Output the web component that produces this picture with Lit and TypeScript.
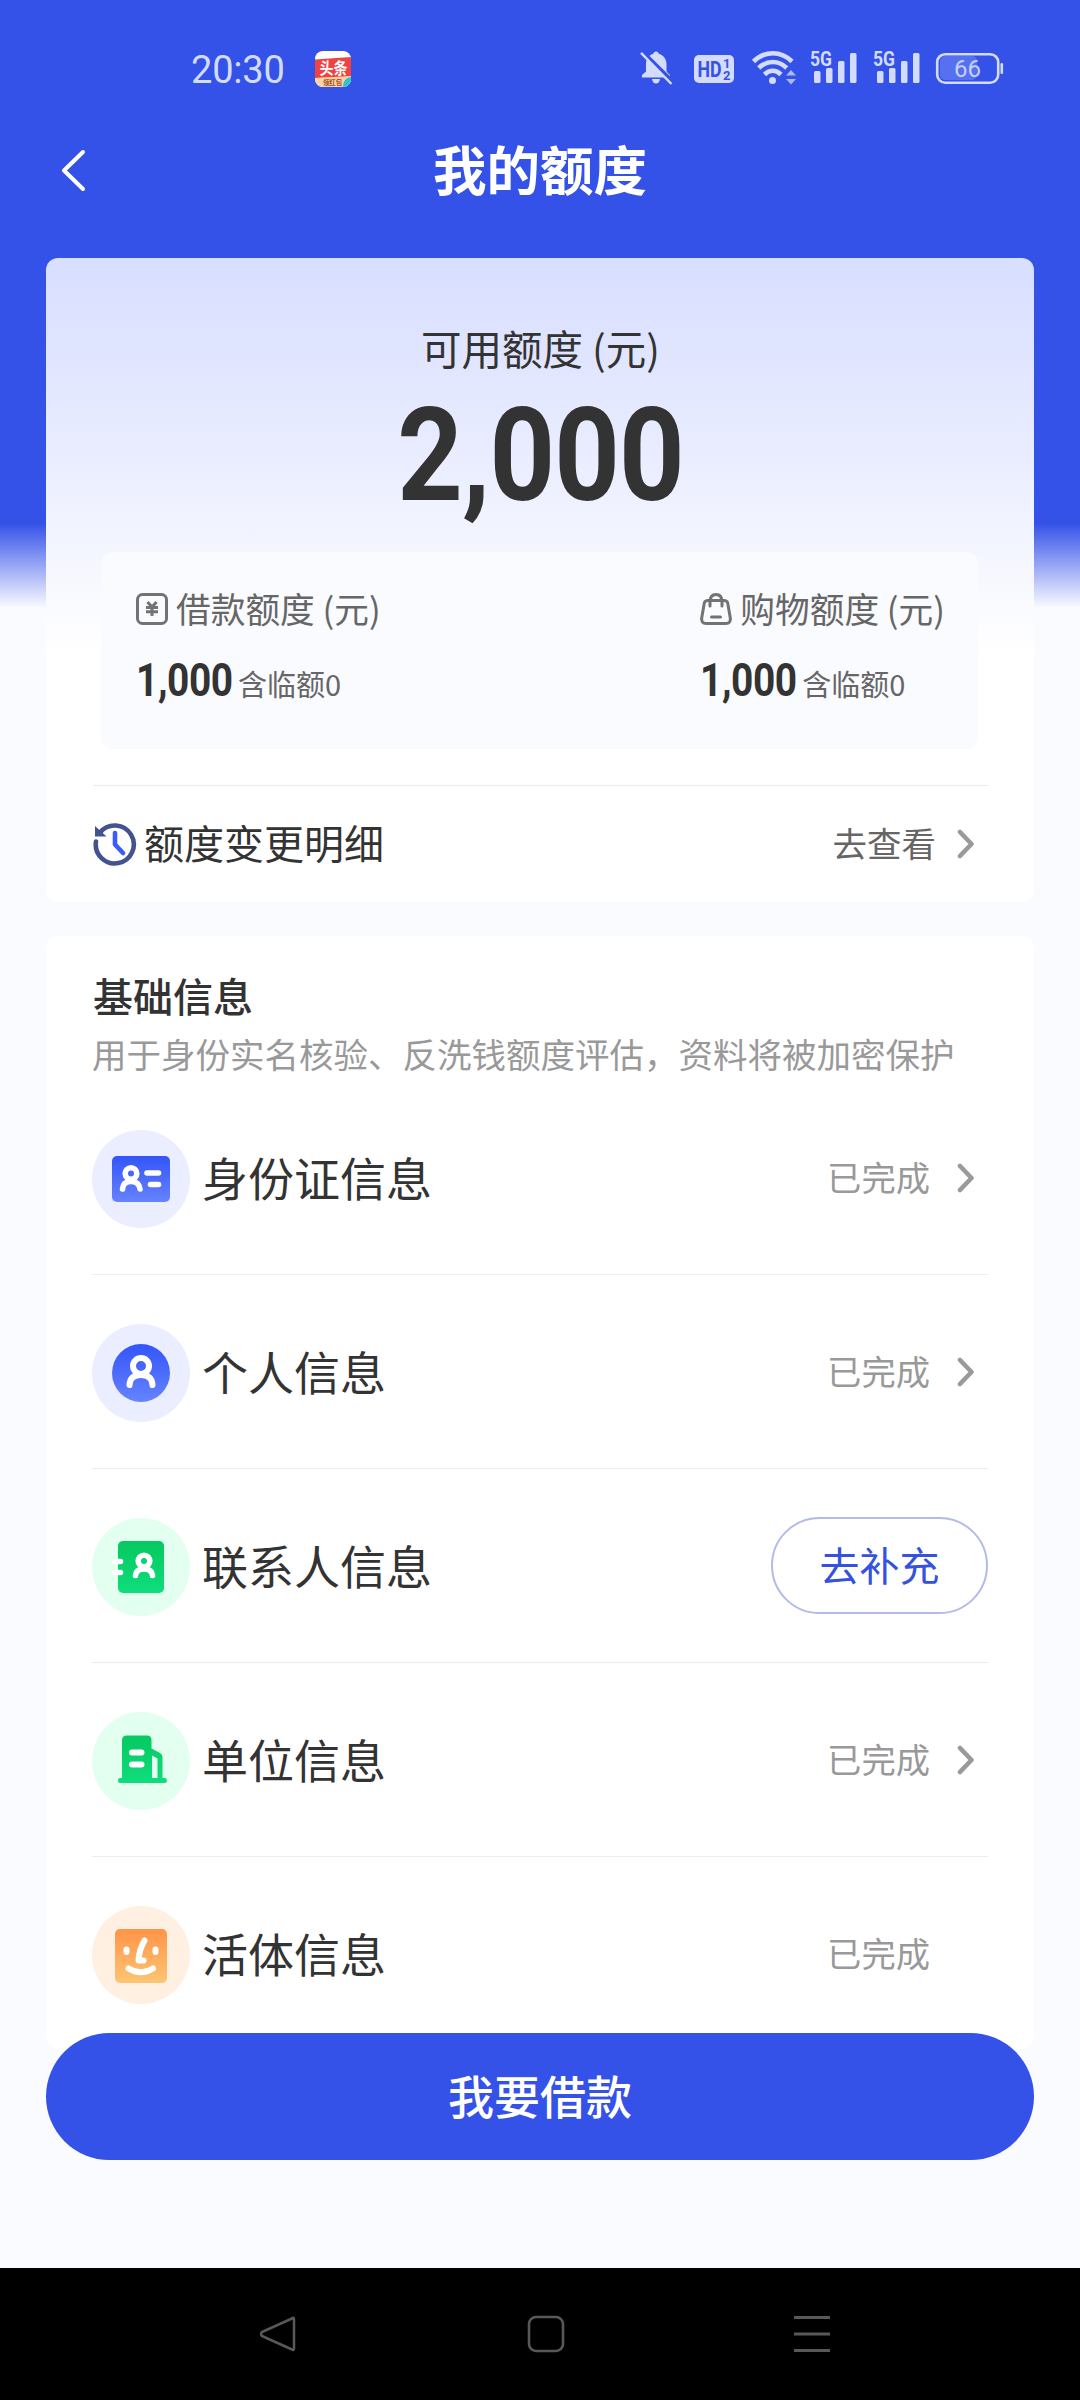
import { LitElement, html, css, svg, nothing, type TemplateResult, type SVGTemplateResult } from "lit";
import { customElement, property } from "lit/decorators.js";

const FONT = css`"Noto Sans CJK SC", "Noto Sans", sans-serif`;

@customElement("status-bar")
class StatusBar extends LitElement {
  static styles = css`
    :host {
      display: flex;
      align-items: flex-start;
      height: 120px;
      padding: 50px 77px 0 191px;
      box-sizing: border-box;
      color: #d3dcff;
      font-family: Roboto, "Liberation Sans", sans-serif;
    }
    svg { display: block; flex: none; overflow: visible; }
    .clock { font-size: 38px; line-height: 40px; width: 124px; white-space: nowrap; letter-spacing: -0.2px; }
    .spacer { flex: 1; }
    .bell { margin-right: 22px; }
    .hd { margin-right: 18px; }
    .wifi { margin-right: 13px; }
    .signal { margin-right: 16px; }
    .mini { font: 700 16px "Noto Sans CJK SC", sans-serif; fill: #fff; }
    .tiny { font: 700 7px "Noto Sans CJK SC", sans-serif; fill: #9c4a1a; }
    .hdtext { font: 700 21.500px Roboto, sans-serif; fill: #3451e8; }
    .hdnum { font: 700 13px Roboto, sans-serif; fill: #3451e8; }
    .gen { font: 700 21px Roboto, sans-serif; fill: #d3dcff; }
    .level { font: 400 24px Roboto, sans-serif; fill: #c6d1ff; }
  `;

  private signal() {
    return html`<svg class="signal" width="47" height="36" viewBox="0 0 47 36">
      <text class="gen" x="0" y="16" textLength="22" lengthAdjust="spacingAndGlyphs">5G</text>
      <g fill="#d3dcff">
        <rect x="4" y="21" width="6.5" height="12" rx="1.5" />
        <rect x="16" y="18" width="6.5" height="15" rx="1.5" />
        <rect x="28" y="11" width="6.5" height="22" rx="1.5" />
        <rect x="40" y="3" width="6.5" height="30" rx="1.5" />
      </g>
    </svg>`;
  }

  render() {
    return html`
      <div class="clock">20:30</div>
      <svg width="36" height="38" viewBox="0 0 36 38">
        <defs>
          <clipPath id="app"><rect y="1" width="36" height="36" rx="8" /></clipPath>
        </defs>
        <g clip-path="url(#app)">
          <rect y="1" width="36" height="36" fill="#fff" />
          <path d="M0 9.500L36 7V27L0 28z" fill="#ee4342" />
          <path d="M0 28L36 26V37H0z" fill="#fbd3a4" />
          <path d="M36 27q-8 1-8 10h8z" fill="#29c4cf" />
        </g>
        <text class="mini" x="4.500" y="24" textLength="28" lengthAdjust="spacingAndGlyphs">头条</text>
        <text class="tiny" x="8" y="35" textLength="19" lengthAdjust="spacingAndGlyphs">领红包</text>
      </svg>
      <div class="spacer"></div>
      <svg class="bell" width="32" height="36" viewBox="0 0 32 36">
        <path d="M16 1.5c1.600 0 2.500 1 2.600 2.200C23.500 5 26.500 9 26.500 14v7.500l3.500 3.500v2.500H2V25l4-3.500V14c0-5 3-9 7.400-10.300C13.600 2.500 14.400 1.500 16 1.500zM12 29h8c-.5 3-2 4.500-4 4.500S12.500 32 12 29z" fill="#d3dcff" />
        <path d="M1 0.500L32 31" stroke="#3451e8" stroke-width="4" />
        <path d="M1 2.800L31.500 34" stroke="#d3dcff" stroke-width="2.500" />
      </svg>
      <svg class="hd" width="40" height="36" viewBox="0 0 40 36">
        <rect y="5" width="40" height="28" rx="5" fill="#d3dcff" />
        <text class="hdtext" x="3.500" y="26.500" textLength="24" lengthAdjust="spacingAndGlyphs">HD</text>
        <text class="hdnum" x="29" y="18">1</text>
        <text class="hdnum" x="29" y="29.500">2</text>
      </svg>
      <svg class="wifi" width="45" height="36" viewBox="0 0 45 36">
        <g fill="none" stroke="#d3dcff" stroke-width="4.600">
          <path d="M1.500 11.500C12.500 0.500 29 0.500 40 11.500" />
          <path d="M6.800 18C15 10 26.500 10 34.700 18" />
          <path d="M12.500 24.500C17.500 19.500 24 19.500 29 24.500" />
        </g>
        <circle cx="20.500" cy="30.500" r="3.500" fill="#d3dcff" />
        <path d="M39 20l5 5.500H34zM39 34.500l5-5.500H34z" fill="#a9b8ff" />
      </svg>
      ${this.signal()} ${this.signal()}
      <svg width="67" height="36" viewBox="0 0 67 36">
        <rect x="4" y="6" width="37" height="24" rx="5" fill="#5570f0" />
        <rect x="1.200" y="4.200" width="61" height="28.500" rx="8" fill="none" stroke="#d3dcff" stroke-width="2.600" />
        <rect x="64.500" y="13" width="2.600" height="11" rx="1.300" fill="#d3dcff" />
        <text class="level" x="18" y="27" textLength="27">66</text>
      </svg>
    `;
  }
}

@customElement("page-header")
class PageHeader extends LitElement {
  static styles = css`
    :host {
      display: grid;
      grid-template-columns: 100px 1fr 100px;
      align-items: center;
      height: 102px;
      padding: 0 0 36px;
      color: #fff;
      font-family: ${FONT};
    }
    svg { display: block; margin-left: 60px; }
    .title { text-align: center; font-size: 53.500px; line-height: 60px; font-weight: 700; padding-bottom: 6px; }
  `;
  render() {
    return html`
      <svg width="28" height="44" viewBox="0 0 28 44">
        <path d="M23 3L4 21.500L23 40" fill="none" stroke="#fff" stroke-width="4" stroke-linecap="round" stroke-linejoin="round" />
      </svg>
      <div class="title">我的额度</div>
    `;
  }
}

const chevron = html`<svg class="chevron" width="18" height="30" viewBox="0 0 18 30">
  <path d="M3 3L14.500 15L3 27" fill="none" stroke="#9a9a9a" stroke-width="4.600" stroke-linecap="round" stroke-linejoin="round" />
</svg>`;

const yenIcon = html`<svg width="32" height="32" viewBox="0 0 32 32" fill="none" stroke="#737373">
  <rect x="1.500" y="1.500" width="29" height="29" rx="5" stroke-width="3" />
  <path d="M11.500 9L16 14L20.500 9M16 14V23M10 14.500H22M10 18.700H22" stroke-width="3" />
</svg>`;

const bagIcon = html`<svg width="32" height="32" viewBox="0 0 32 32" fill="none" stroke="#737373" stroke-width="3" stroke-linecap="round">
  <path d="M8 7.500H24Q27 7.500 27.700 10L30.300 25Q30.800 30.500 26 30.500H6Q1.200 30.500 1.700 25L4.300 10Q5 7.500 8 7.500z" />
  <path d="M10 13V9Q10 1.500 16 1.500T22 9V13M11.500 24H20.500" />
</svg>`;

@customElement("quota-card")
class QuotaCard extends LitElement {
  static styles = css`
    :host {
      display: flex;
      flex-direction: column;
      height: 644px;
      box-sizing: border-box;
      padding: 64px 46px 0 47px;
      border-radius: 12px;
      background: linear-gradient(#d8dfff 0, #dde2ff 60px, #ebeeff 210px, #fff 395px);
      font-family: ${FONT};
      color: #333;
    }
    svg { display: block; flex: none; }
    .label { text-align: center; font-size: 40.500px; line-height: 52px; }
    .total {
      text-align: center;
      font: 700 130px/130px Roboto, "Liberation Sans", sans-serif;
      letter-spacing: -1px;
      transform: scaleX(0.88);
      margin-top: 17px;
      height: 163px;
    }
    .panel {
      display: flex;
      justify-content: space-between;
      box-sizing: border-box;
      height: 198px;
      margin: -1px 10px 0 8px;
      padding: 35px 33px 0 35px;
      border-radius: 12px;
      background: #fafbff;
    }
    .name { display: flex; align-items: center; gap: 8px; font-size: 34.700px; line-height: 42px; color: #666; white-space: nowrap; }
    .name svg { margin-top: 3px; }
    .values { display: flex; align-items: baseline; margin-top: 27px; line-height: 48px; }
    .amount {
      font: 700 46px/48px Roboto, "Liberation Sans", sans-serif;
      width: 102px;
      letter-spacing: -0.5px;
      transform: scaleX(0.845);
      transform-origin: 0 50%;
    }
    .temp { font-size: 29px; color: #666; }
    .history {
      display: flex;
      align-items: center;
      height: 117px;
      margin-top: 36px;
      border-top: 1.500px solid #ececee;
    }
    .history svg { margin-top: 1px; }
    .history-name { font-size: 40px; margin-left: 7px; flex: 1; }
    .go { font-size: 34.500px; color: #666; }
    .history-name, .go { padding-bottom: 3px; }
    .history .chevron { margin: 0 13px 0 21px; }
  `;

  private quota(icon: TemplateResult, name: string) {
    return html`<div>
      <div class="name">${icon}<span>${name} (元)</span></div>
      <div class="values"><span class="amount">1,000</span><span class="temp">含临额0</span></div>
    </div>`;
  }

  render() {
    return html`
      <div class="label">可用额度 (元)</div>
      <div class="total">2,000</div>
      <div class="panel">${this.quota(yenIcon, "借款额度")} ${this.quota(bagIcon, "购物额度")}</div>
      <div class="history">
        <svg width="44" height="44" viewBox="0 0 44 44" fill="none">
          <path d="M7 10.500A19 19 0 1 1 3 19.500" stroke="#43538f" stroke-width="4.600" stroke-linecap="round" />
          <path d="M2 4V14.500H13.500z" fill="#43538f" />
          <path d="M22 11V22.500L30 31" stroke="#3a5bff" stroke-width="4.600" stroke-linecap="round" stroke-linejoin="round" />
        </svg>
        <span class="history-name">额度变更明细</span>
        <span class="go">去查看</span>
        ${chevron}
      </div>
    `;
  }
}

type Kind = "idcard" | "person" | "contacts" | "company" | "face";

const glyphs: Record<Kind, SVGTemplateResult> = {
  idcard: svg`
    <circle cx="49" cy="49" r="49" fill="#ebeeff" />
    <rect x="20" y="26" width="58" height="46" rx="5" fill="url(#blue)" />
    <g fill="none" stroke="#fff" stroke-width="5.600" stroke-linecap="round">
      <circle cx="39" cy="43.500" r="5.800" />
      <path d="M30.500 59Q31 51.500 39 51.500T48 59M55 43H66.500M58.500 54.500H66.500" />
    </g>`,
  person: svg`
    <circle cx="49" cy="49" r="49" fill="#ebeeff" />
    <circle cx="49" cy="49" r="29" fill="url(#blue)" />
    <g fill="none" stroke="#fff" stroke-width="6" stroke-linecap="round">
      <circle cx="49" cy="42" r="8" />
      <path d="M37.500 61Q38 51 49 51T60.500 61" />
    </g>`,
  contacts: svg`
    <circle cx="49" cy="49" r="49" fill="#e3fff0" />
    <rect x="26" y="23" width="46" height="52" rx="5" fill="url(#green)" />
    <g fill="none" stroke="#fff" stroke-width="5.600" stroke-linecap="round">
      <path d="M23 43.500H28.500M23 54.500H28.500" />
      <circle cx="52" cy="43" r="5.800" />
      <path d="M43.500 57.500Q44 51 52 51T60.500 57.500" />
    </g>`,
  company: svg`
    <circle cx="49" cy="49" r="49" fill="#e3fff0" />
    <path d="M35 23.500H55Q59.500 23.500 59.500 28V36.500L68 41Q70.500 42.500 70.500 45V66H73Q75 66.500 75 68.500T73 71H28Q26 71 26 68.500T28 66H30V28Q30 23.500 35 23.500z" fill="url(#green)" />
    <path d="M60 43.500L65.500 46.500V66H60z" fill="#e3fff0" />
    <path d="M40 40.500H49.500M40 52.500H49.500" stroke="#fff" stroke-width="6" stroke-linecap="round" />`,
  face: svg`
    <circle cx="49" cy="49" r="49" fill="#fff0e1" />
    <rect x="23" y="23" width="52" height="54" rx="5" fill="url(#orange)" />
    <g fill="none" stroke="#fff" stroke-width="6" stroke-linecap="round" stroke-linejoin="round">
      <path d="M34.500 43.500V46M63.500 43.500V46M52.500 34.500Q47 44 46.500 54.500H51.500" />
      <path d="M36.500 62.500Q49 70 61 62.500" />
    </g>`,
};

@customElement("info-row")
class InfoRow extends LitElement {
  @property() kind: Kind = "idcard";
  @property() name = "";
  @property() status: "done" | "todo" | "final" = "done";

  static styles = css`
    :host {
      display: flex;
      align-items: center;
      box-sizing: border-box;
      height: 194px;
      padding-top: 2px;
      margin-left: -1px;
      border-bottom: 1.500px solid #ececee;
      font-family: ${FONT};
      color: #333;
    }
    :host(:last-of-type) { border-color: transparent; }
    svg { display: block; flex: none; }
    .name { flex: 1; margin-left: 12px; padding-bottom: 5px; font-size: 46px; line-height: 60px; }
    .done { font-size: 34.300px; color: #999; padding-bottom: 5px; }
    .final { margin-right: 58px; }
    .chevron { margin: 0 13px 1px 27px; }
    .todo {
      box-sizing: border-box;
      width: 217px;
      height: 97px;
      margin-bottom: 3px;
      border: 2px solid #b3bbe8;
      border-radius: 49px;
      text-align: center;
      font-size: 40px;
      line-height: 91px;
      color: #3451e0;
    }
  `;

  render() {
    return html`
      <svg width="98" height="98" viewBox="0 0 98 98">
        <defs>
          <linearGradient id="blue" x2="0" y2="1"><stop stop-color="#3355f8" /><stop offset="1" stop-color="#6683ff" /></linearGradient>
          <linearGradient id="green" x2="0" y2="1"><stop stop-color="#06c860" /><stop offset="1" stop-color="#0fdd7c" /></linearGradient>
          <linearGradient id="orange" x2="0" y2="1"><stop stop-color="#ff9448" /><stop offset="1" stop-color="#fdc573" /></linearGradient>
        </defs>
        ${glyphs[this.kind]}
      </svg>
      <span class="name">${this.name}</span>
      ${this.status === "todo"
        ? html`<span class="todo">去补充</span>`
        : html`<span class="done ${this.status === "final" ? "final" : ""}">已完成</span>${this.status === "done" ? chevron : nothing}`}
    `;
  }
}

@customElement("app-root")
class AppRoot extends LitElement {
  static styles = css`
    :host {
      display: flex;
      flex-direction: column;
      width: 1080px;
      height: 2400px;
      overflow: hidden;
      font-family: ${FONT};
      background: linear-gradient(#3451e8 0, #3451e8 523px, #fafbff 608px);
    }
    quota-card { margin: 0 46px; flex: none; }
    .info {
      flex: none;
      box-sizing: border-box;
      height: 1113px;
      margin: 34px 46px 0;
      padding: 33px 46px 0 47px;
      border-radius: 12px;
      background: #fff;
    }
    .heading { font-size: 40px; line-height: 52px; font-weight: 500; color: #333; }
    .note { height: 60px; line-height: 64px; font-size: 34.500px; color: #999; white-space: nowrap; margin-left: -1px; }
    .borrow {
      position: relative;
      flex: none;
      height: 127px;
      margin: -16px 46px 0;
      border-radius: 64px;
      background: #3451e8;
      color: #fff;
      text-align: center;
      font-size: 46px;
      font-weight: 500;
      line-height: 123px;
    }
    .nav {
      flex: none;
      display: flex;
      justify-content: space-between;
      height: 132px;
      box-sizing: border-box;
      margin-top: auto;
      padding: 46px 248px 0 258px;
      background: #000;
    }
    .nav svg { display: block; }
    .home { margin-left: 2px; }
  `;

  render() {
    return html`
      <status-bar></status-bar>
      <page-header></page-header>
      <quota-card></quota-card>
      <div class="info">
        <div class="heading">基础信息</div>
        <div class="note">用于身份实名核验、反洗钱额度评估，资料将被加密保护</div>
        <info-row kind="idcard" name="身份证信息"></info-row>
        <info-row kind="person" name="个人信息"></info-row>
        <info-row kind="contacts" name="联系人信息" status="todo"></info-row>
        <info-row kind="company" name="单位信息"></info-row>
        <info-row kind="face" name="活体信息" status="final"></info-row>
      </div>
      <div class="borrow">我要借款</div>
      <div class="nav">
        <svg width="40" height="40" viewBox="0 0 40 40"><path d="M34 4.500Q36 2.500 36 5.500V34Q36 37 34 35.500L4 22Q2 20 4 18z" fill="none" stroke="#585858" stroke-width="2.500" stroke-linejoin="round" /></svg>
        <svg class="home" width="40" height="40" viewBox="0 0 40 40"><rect x="3" y="3" width="34" height="34" rx="7" fill="none" stroke="#585858" stroke-width="2.600" /></svg>
        <svg width="40" height="40" viewBox="0 0 40 40"><path d="M2 3.500H38M2 20H38M2 36.500H38" stroke="#585858" stroke-width="2.800" /></svg>
      </div>
    `;
  }
}
